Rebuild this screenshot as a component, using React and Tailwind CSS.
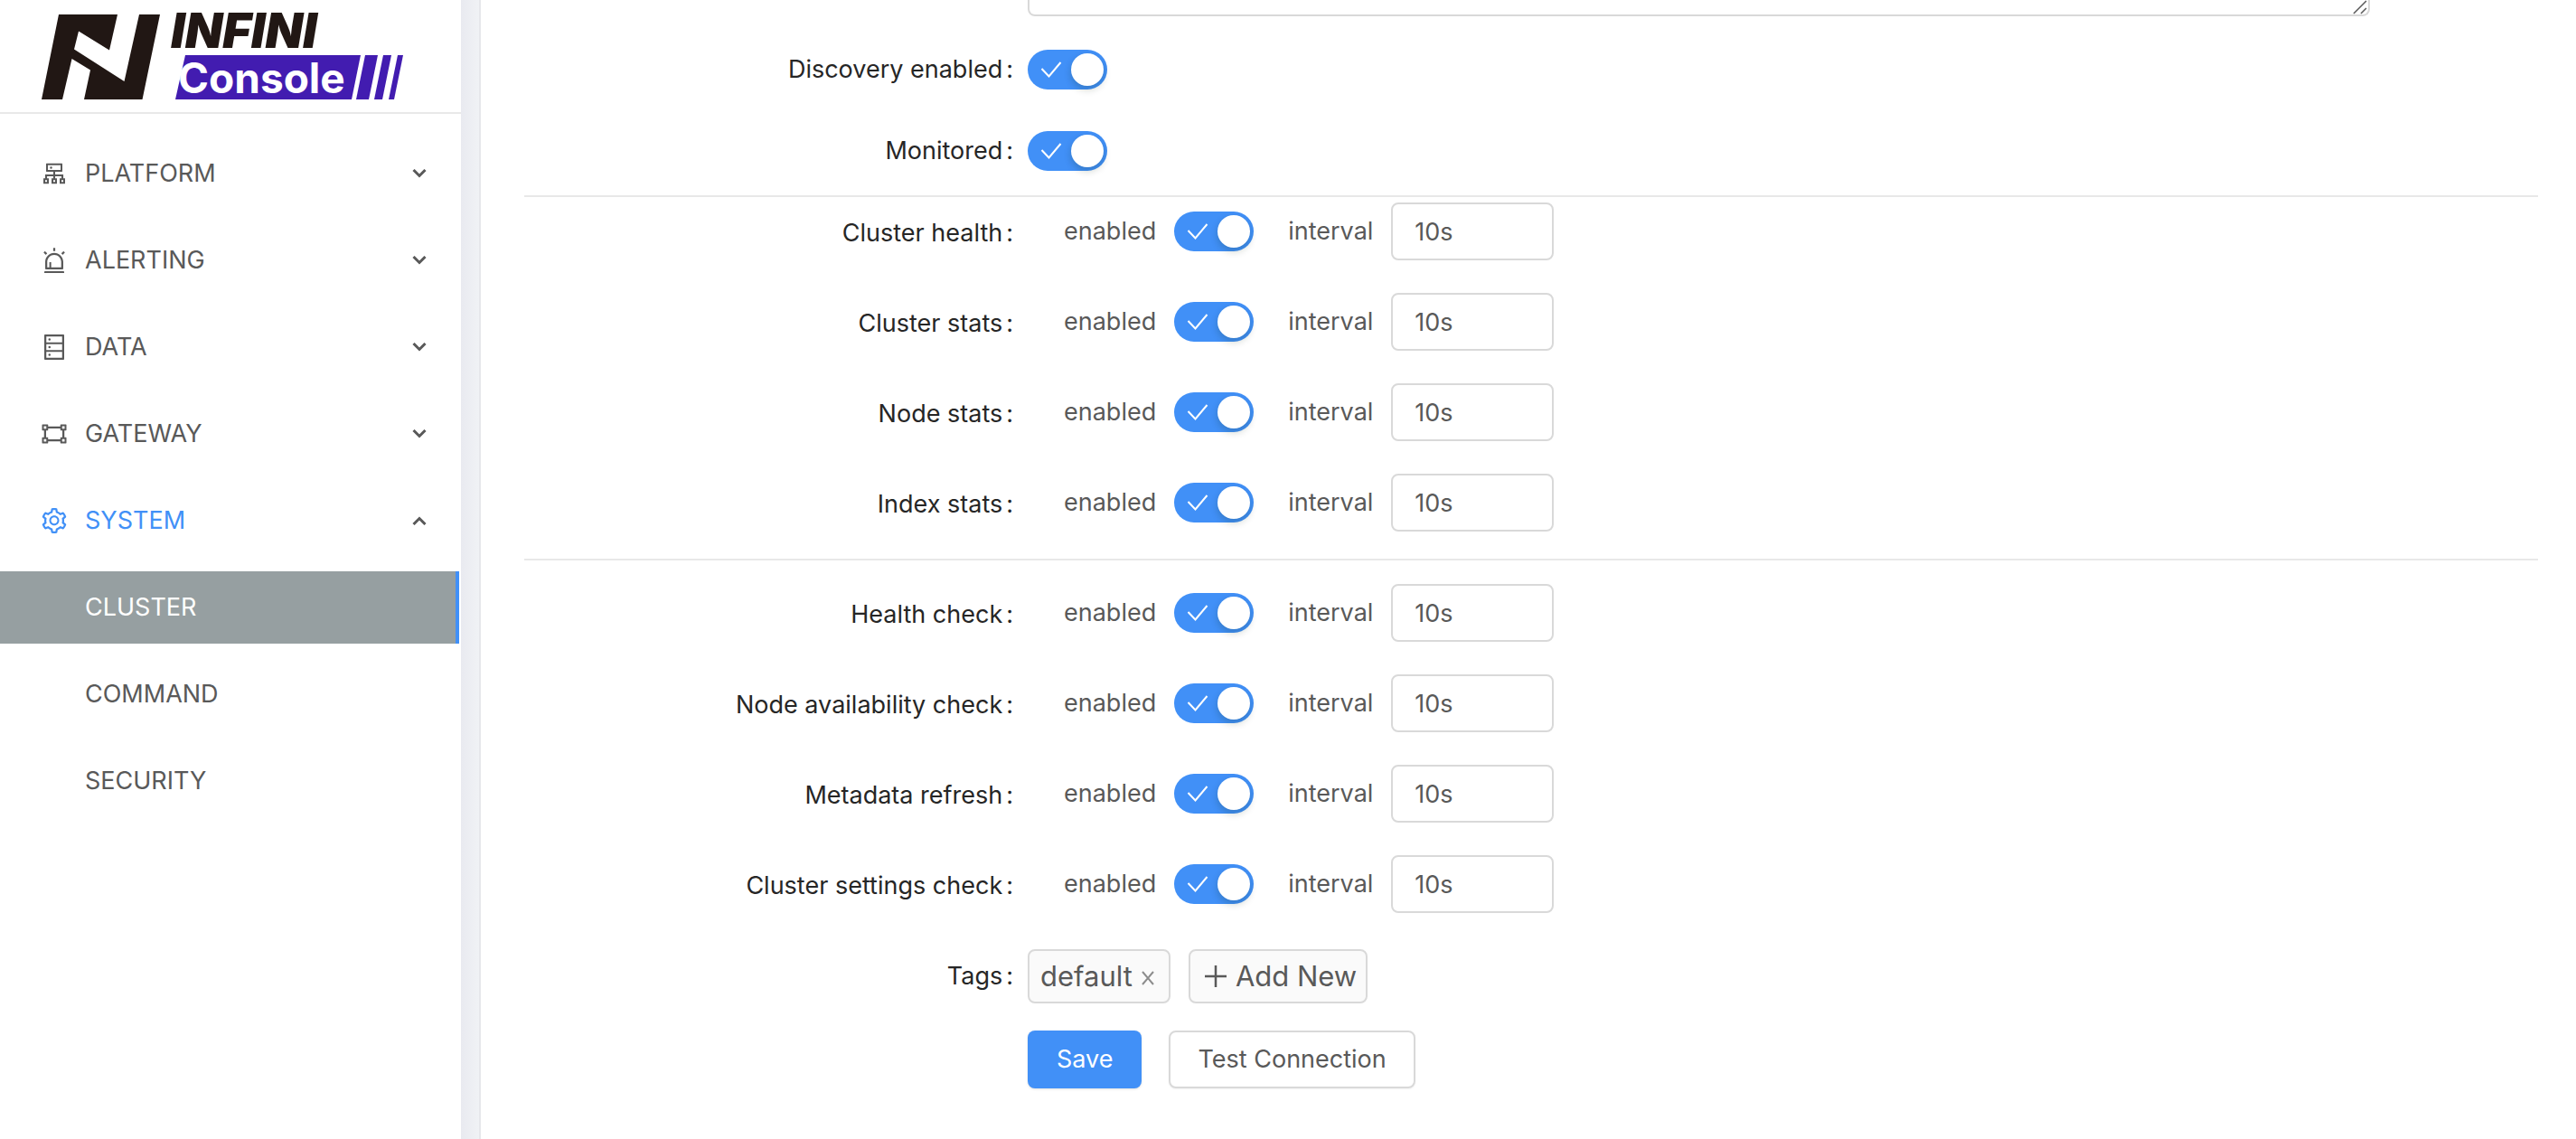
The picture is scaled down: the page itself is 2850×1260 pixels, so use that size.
import { useState } from "react";
import {
  AiOutlineAlert,
  AiOutlineCluster,
  AiOutlineDatabase,
  AiOutlineGateway,
  AiOutlineSetting,
} from "react-icons/ai";

const MENU = [
  { label: "PLATFORM", Icon: AiOutlineCluster },
  { label: "ALERTING", Icon: AiOutlineAlert },
  { label: "DATA", Icon: AiOutlineDatabase },
  { label: "GATEWAY", Icon: AiOutlineGateway },
  { label: "SYSTEM", Icon: AiOutlineSetting, open: true },
];

const SUBMENU = ["CLUSTER", "COMMAND", "SECURITY"];

const COLLECT = ["Cluster health", "Cluster stats", "Node stats", "Index stats"];
const CHECKS = ["Health check", "Node availability check", "Metadata refresh", "Cluster settings check"];

const slug = (text) => text.toLowerCase().replace(/\s+/g, "-");

function Logo() {
  return (
    <svg viewBox="0 0 508 124" className="block h-[124px] w-[508px]" role="img" aria-label="INFINI Console">
      <g transform="translate(46 16)">
        <path
          fill="#211714"
          d="M19 0H84L75 39.500L41 18.500L36 38.500L91.500 74L108 0H131L111.500 94H47L54 61.500L33.500 49L23 94H0Z"
        />
        <text x="143" y="37" fontSize="54" fontWeight="900" fontStyle="italic" fill="#211714" className="font-['Inter']">
          INFINI
        </text>
        <path fill="#421cb0" d="M159 45H353L343 94H148Z" />
        <path fill="#421cb0" d="M358 45H372L362 94H348Z" />
        <path fill="#421cb0" d="M378 45H387L377 94H368Z" />
        <path fill="#421cb0" d="M394 45H400L390 94H384Z" />
        <text x="151" y="87" fontSize="46" fontWeight="700" fill="#fff" className="font-['Inter']">
          Console
        </text>
      </g>
    </svg>
  );
}

function Chevron({ up }) {
  return (
    <svg viewBox="0 0 16 10" className="h-[10px] w-4" fill="none" stroke="#595959" strokeWidth="3" aria-hidden="true">
      <path d={up ? "M1.500 9L8 2.500L14.500 9" : "M1.500 1L8 7.500L14.500 1"} />
    </svg>
  );
}

function Toggle({ id, label }) {
  const [on, setOn] = useState(true);
  return (
    <button
      id={id}
      type="button"
      role="switch"
      aria-checked={on}
      aria-label={label}
      onClick={() => setOn(!on)}
      className={`flex h-11 w-[88px] shrink-0 items-center justify-between rounded-full px-1 ${
        on ? "bg-[#4190f7]" : "flex-row-reverse bg-[#bfbfbf]"
      }`}
    >
      <svg viewBox="0 0 24 20" className="ml-2.5 h-5 w-6" fill="none" stroke="#fff" strokeWidth="2" aria-hidden="true">
        <path d="M1.500 9L9.500 17.500L22.500 2" />
      </svg>
      <span className="size-9 rounded-full bg-white shadow-[0_4px_8px_rgba(0,35,11,0.2)]" />
    </button>
  );
}

function Row({ label, htmlFor, children, className = "", labelClass = "" }) {
  return (
    <div className={`flex items-center ${className}`}>
      <label htmlFor={htmlFor} className={`w-1/4 pr-4 text-right text-[#262626] ${labelClass}`}>
        {label}
        <span className="ml-1">:</span>
      </label>
      <div className="flex w-2/3 items-center">{children}</div>
    </div>
  );
}

function IntervalRow({ label }) {
  const id = slug(label);
  return (
    <Row label={label} htmlFor={`${id}-enabled`} labelClass="pt-1">
      <span className="ml-10 mr-5">enabled</span>
      <Toggle id={`${id}-enabled`} label={`${label} enabled`} />
      <label htmlFor={`${id}-interval`} className="ml-[38px] mr-5">
        interval
      </label>
      <input
        id={`${id}-interval`}
        defaultValue="10s"
        className="h-16 w-[180px] rounded-lg border-2 border-[#d9d9d9] bg-white px-6 outline-none"
      />
    </Row>
  );
}

export default function App() {
  return (
    <div className="flex h-screen overflow-hidden bg-[#f0f2f5] font-['Inter',sans-serif] text-[27px] leading-10 text-[#595959]">
      <aside className="w-[510px] shrink-0 bg-white">
        <div className="border-b-2 border-[#e8e8e8]">
          <Logo />
        </div>
        <nav className="flex flex-col gap-4 pr-0.5 pt-[26px]">
          {MENU.map(({ label, Icon, open }) => (
            <button
              key={label}
              type="button"
              aria-expanded={!!open}
              className={`flex h-20 items-center pl-11 pr-9 ${open ? "text-[#4190f7]" : ""}`}
            >
              <Icon className="mr-[18px] size-8" />
              <span className="flex-1 text-left">{label}</span>
              <Chevron up={open} />
            </button>
          ))}
          {SUBMENU.map((label, i) => (
            <a
              key={label}
              href="#"
              className={`flex h-20 items-center pl-[94px] ${
                i === 0 ? "border-r-4 border-[#4190f7] bg-[#969fa1] text-white" : ""
              }`}
            >
              {label}
            </a>
          ))}
        </nav>
      </aside>

      <div className="w-[22px] shrink-0 border-r-2 border-[#e6e7eb] bg-linear-to-r from-[#e9eaf0] to-[#f0f2f5]" />

      <main className="min-w-0 flex-1 bg-white pl-12 pr-[42px]">
        <form onSubmit={(e) => e.preventDefault()}>
          <div className="flex">
            <div className="w-1/4" />
            <div className="relative w-2/3">
              <textarea
                aria-label="Description"
                className="block h-[18px] w-full resize-none rounded-b-lg border-2 border-t-0 border-[#d9d9d9] outline-none"
              />
              <svg
                viewBox="0 0 16 16"
                className="absolute bottom-0.5 right-[3px] size-4"
                stroke="#595959"
                strokeWidth="1.500"
                aria-hidden="true"
              >
                <path d="M1 15L15 1M9 15L15 9" />
              </svg>
            </div>
          </div>

          <Row label="Discovery enabled" htmlFor="discovery" className="mt-[14px] h-[90px]">
            <Toggle id="discovery" label="Discovery enabled" />
          </Row>
          <Row label="Monitored" htmlFor="monitored" className="h-[90px]">
            <Toggle id="monitored" label="Monitored" />
          </Row>

          <hr className="mb-1.5 mt-1 border-t-2 border-[#e8e8e8]" />
          <div className="flex flex-col gap-9">
            {COLLECT.map((label) => (
              <IntervalRow key={label} label={label} />
            ))}
          </div>

          <hr className="mb-[26px] mt-[30px] border-t-2 border-[#e8e8e8]" />
          <div className="flex flex-col gap-9">
            {CHECKS.map((label) => (
              <IntervalRow key={label} label={label} />
            ))}
          </div>

          <Row label="Tags" htmlFor="add-tag" className="mt-10">
            <span className="mr-5 flex h-[60px] items-center rounded-lg border-2 border-[#d9d9d9] bg-[#fafafa] pl-3 pr-4 text-[31px]">
              default
              <button type="button" aria-label="Remove default" className="ml-2.5 pt-1">
                <svg viewBox="0 0 14 16" className="h-4 w-3.5" stroke="#8c8c8c" strokeWidth="2" aria-hidden="true">
                  <path d="M1 1L13 15M13 1L1 15" />
                </svg>
              </button>
            </span>
            <button
              id="add-tag"
              type="button"
              className="flex h-[60px] items-center rounded-lg border-2 border-[#d9d9d9] bg-[#fafafa] pl-4 pr-2.5 text-[31px]"
            >
              <svg viewBox="0 0 24 24" className="mr-2.5 size-6" stroke="#595959" strokeWidth="2.500" aria-hidden="true">
                <path d="M0 12H24M12 0V24" />
              </svg>
              Add New
            </button>
          </Row>

          <div className="mt-[30px] flex">
            <div className="w-1/4" />
            <button type="submit" className="mr-[30px] h-16 rounded-lg bg-[#4190f7] px-8 text-white shadow-sm">
              Save
            </button>
            <button type="button" className="h-16 rounded-lg border-2 border-[#d9d9d9] bg-white px-[30px] shadow-xs">
              Test Connection
            </button>
          </div>
        </form>
      </main>
    </div>
  );
}
